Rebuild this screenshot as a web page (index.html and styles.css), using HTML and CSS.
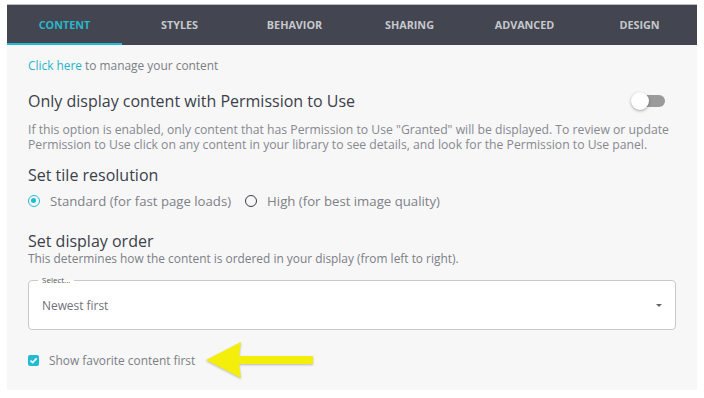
FILE: index.html
```html
<!DOCTYPE html>
<html>
<head>
<meta charset="utf-8">
<link rel="stylesheet" href="styles.css">
</head>
<body>
<div class="panel">
  <nav class="tabs">
    <div class="tab active">Content</div>
    <div class="tab">Styles</div>
    <div class="tab">Behavior</div>
    <div class="tab">Sharing</div>
    <div class="tab">Advanced</div>
    <div class="tab">Design</div>
  </nav>
  <div class="body">
    <p class="manage"><span class="link">Click here</span> to manage your content</p>
    <div class="perm-row">
      <h2 class="h-lg">Only display content with Permission to Use</h2>
      <div class="switch"><span class="knob"></span></div>
    </div>
    <p class="desc">If this option is enabled, only content that has Permission to Use "Granted" will be displayed. To review or update Permission to Use click on any content in your library to see details, and look for the Permission to Use panel.</p>
    <h2 class="h-md">Set tile resolution</h2>
    <div class="radios">
      <label class="radio"><span class="dot on"></span>Standard (for fast page loads)</label>
      <label class="radio"><span class="dot"></span>High (for best image quality)</label>
    </div>
    <h2 class="h-md order">Set display order</h2>
    <p class="sub">This determines how the content is ordered in your display (from left to right).</p>
    <div class="select">
      <span class="legend">Select...</span>
      <span class="value">Newest first</span>
      <span class="caret"></span>
    </div>
    <div class="check-row">
      <span class="check"><svg width="11" height="11" viewBox="0 0 11 11"><path d="M2.5 5.6 L4.6 7.6 L8.6 3.4" fill="none" stroke="#fff" stroke-width="1.6"/></svg></span>
      <span class="check-label">Show favorite content first</span>
      <svg class="arrow" width="112" height="40" viewBox="0 0 112 40"><polygon points="2,20 37,2 35,16 109,16 109,24 35,24 37,38" fill="#f3ef0a"/></svg>
    </div>
  </div>
</div>
</body>
</html>
```

FILE: styles.css
```css
* { box-sizing: border-box; }
html, body { margin: 0; padding: 0; background: #fff; }
body { padding: 4px 7px 0 7px; font-family: "Open Sans", Lato, sans-serif; }
.panel { width: 690px; height: 386px; background: #f7f7f7; border-top: 1px solid #b9bbbf; }
.tabs { display: grid; grid-template-columns: repeat(6, 1fr); height: 40px; background: #434651; }
.tab { display: flex; align-items: center; justify-content: center; text-transform: uppercase; color: #c6c8cc; font-size: 10.8px; font-weight: 700; border-bottom: 2px solid transparent; }
.tab.active { color: #2ab7c9; border-bottom-color: #21bcd4; }
.body { padding: 0 21px; }
.manage { margin: 13px 0 0; font-size: 11.9px; color: #7c7f86; line-height: 14px; }
.link { color: #1eb6cb; }
.perm-row { display: flex; align-items: center; justify-content: space-between; margin-top: 18px; padding-right: 11px; }
h2 { margin: 0; font-weight: 400; color: #3b3f4a; }
.h-lg { font-size: 16px; line-height: 22px; }
.switch { position: relative; width: 34px; height: 18px; }
.switch::before { content: ""; position: absolute; left: 4px; top: 3px; width: 30px; height: 12px; border-radius: 6px; background: #9b9b9b; }
.knob { position: absolute; left: 0; top: 0; width: 18px; height: 18px; border-radius: 50%; background: #fff; box-shadow: 0 1px 3px rgba(0,0,0,0.35); }
.desc { margin: 10px 0 0; font-size: 12.2px; line-height: 15px; color: #868990; }
.h-md { font-size: 16px; line-height: 20px; margin-top: 13px; }
.radios { display: flex; gap: 14px; margin-top: 7px; }
.radio { display: flex; align-items: center; gap: 10px; font-size: 13.2px; color: #7e8188; line-height: 18px; }
.dot { width: 12px; height: 12px; border-radius: 50%; border: 1.5px solid #3a3d45; position: relative; }
.dot.on { border-color: #21bcd4; }
.dot.on::after { content: ""; position: absolute; left: 2px; top: 2px; width: 5px; height: 5px; border-radius: 50%; background: #21bcd4; }
.order { margin-top: 21px; }
.sub { margin: 0; font-size: 11.9px; line-height: 14px; color: #7c7f86; }
.select { position: relative; margin-top: 15px; height: 50px; background: #fff; border: 1px solid #c9c9c9; border-radius: 4px; display: flex; align-items: center; padding: 0 13px; }
.legend { position: absolute; left: 9px; top: -6px; padding: 0 4px; font-size: 8px; line-height: 10px; color: #555; background: linear-gradient(#f7f7f7 50%, #fff 50%); }
.value { font-size: 11.9px; color: #6f727a; flex: 1; }
.caret { width: 0; height: 0; border-left: 3.5px solid transparent; border-right: 3.5px solid transparent; border-top: 3.5px solid #666; }
.check-row { display: flex; align-items: center; margin-top: 20px; height: 20px; position: relative; }
.check { width: 11px; height: 11px; border-radius: 2px; background: #21bcd4; display: flex; }
.check-label { margin-left: 10px; font-size: 11.9px; color: #7c7f86; }
.arrow { position: absolute; left: 176px; top: -10px; filter: drop-shadow(0 1px 1px rgba(0,0,0,0.25)); }
```
